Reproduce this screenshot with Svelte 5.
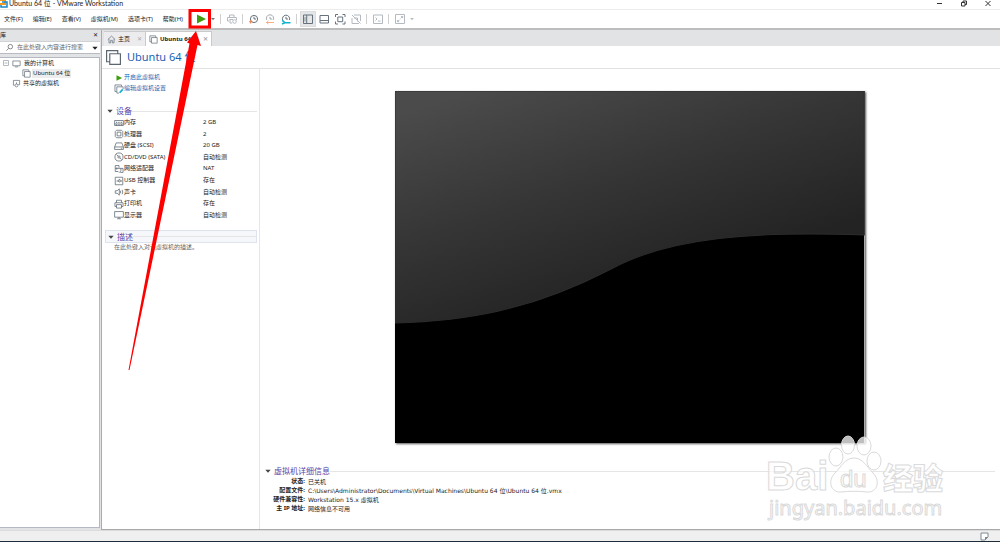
<script>
  const menus = ['文件(F)', '编辑(E)', '查看(V)', '虚拟机(M)', '选项卡(T)', '帮助(H)'];

  const clock = '<circle cx="8" cy="8" r="3.6"/><path d="M8 5.8V8H10"/>';
  const icons = {
    play: '<path d="M4 3.5V12.5L13 8Z" fill="#3f9c0c" stroke="none"/>',
    caret: '<path d="M5 6.5H11L8 10Z" fill="currentColor" stroke="none"/>',
    send: '<path d="M5.5 6V4H10V6M5 10H3.5V6.5H12.5V9M5.5 8.5H9M6 8.5V12H8"/><circle cx="10.5" cy="10.5" r="1.8"/>',
    snap: clock + '<path d="M4.6 9V12.5M3 10.8H6.4" stroke="#f08050"/>',
    revert: '<path d="M4.8 9A3.6 3.6 0 1 1 11.2 9M8 5.8V8H10" opacity=".6"/><path d="M12 11.5H4.5M6.5 9.8L4.5 11.5L6.5 13" stroke="#f4ae88"/>',
    manage: '<path d="M4.8 9.4A3.6 3.6 0 1 1 11.4 9M8 5.8V8H10"/><path d="M12.5 11.8H7M4.2 9.2L6.8 11.8L4 13" stroke="#12b3cf" stroke-width="1.6"/>',
    side: '<path d="M3.5 4H12.5V12.5H3.5ZM6.7 4V12.5"/><path d="M5 6V10.5" stroke-width=".7"/>',
    bottom: '<path d="M4 4.5H12.5V12H4ZM4 9.5H12.5"/>',
    full: '<path d="M3.5 6V3.5H6M10.5 3.5H13V6M13 10.5V13H10.5M6 13H3.5V10.5M5.8 6H10.7V10.7H5.8Z"/>',
    unity: '<path d="M4 7V12.5H11M6 4H12.5V10M6 7H9.5V10.5M4 4L12.5 12.5"/>',
    term: '<path d="M3.5 4H12.5V12.5H3.5ZM5.5 6.5L7 8L5.5 9.5M8 10H10.5"/>',
    stretch: '<path d="M3.5 3.5H12.5V12.5H3.5ZM9 5.5H10.7V7.2M10.5 5.7L8.7 7.5M5.5 9V10.7H7.2M5.7 10.5L7.5 8.7"/>',
    search: '<circle cx="9.5" cy="6.5" r="4"/><path d="M6.5 9.5L2.5 13.5"/>',
    home: '<path d="M1.5 8L8 2L14.5 8M3.5 7V14H6.5V9.5H9.5V14H12.5V7"/>',
    vm: '<path d="M4.5 12H1.5V1.5H12V4.5M4.5 4.5H14.5V14.5H4.5Z"/>',
    computer: '<path d="M1.5 3.5H14.5V12H1.5ZM5 14H11"/>',
    shared: '<path d="M5 11H2.5V2.5H13.5V10H11M8 6V9"/><circle cx="8" cy="11.5" r="2.5"/>',
    edit: '<path d="M4 12H1.5V1.5H12V4M8 14.5H4.5V4.5H14.5V8"/><path d="M9 14L14 8.5" stroke="#12b3cf" stroke-width="2.8"/>',
    memory: '<path d="M1 4H15V12H1ZM1 9.5H15M4 6V8M6.7 6V8M9.4 6V8M12 6V8M4 10V12M8 10V12M12 10V12"/>',
    cpu: '<path d="M5 5H11V11H5ZM4 2H12L14 4V12L12 14H4L2 12V4Z"/>',
    disk: '<path d="M3.5 3H12.5L15 9.5V13.5H1V9.5ZM1 9.5H15M11 11.5H13"/>',
    cd: '<circle cx="8" cy="8" r="6.5"/><circle cx="8" cy="8" r="1.8"/><path d="M4 4L6.7 6.7M9.5 9.5L12 12"/>',
    net: '<path d="M7 12H2V2.5H8V6M4.5 5.5V9M8 7H14.5V13.5H10M2 7H8M11 7V11L8 14"/>',
    usb: '<path d="M2 2H14V14H2ZM4 8H12M10.5 6.5L12 8L10.5 9.5M6 8L8 5.5H10M7 8L9 10.5"/>',
    sound: '<path d="M2 6H5L8.500 3V13L5 10H2ZM10.5 6V10M13 4.5Q15 8 13 11.5"/>',
    printer: '<path d="M4 6V2H12V6M4 12H1.5V6H14.5V12H12M4 9H12V14.5H4Z"/>',
    display: '<path d="M1 2.5H15V11.5H1ZM5 14H11M8 11.5V14"/>'
  };

  const tools = [
    ['play', '开启'], ['caret', '电源选项'], null, ['send', '发送', 'dim'], null,
    ['snap', '拍摄快照'], ['revert', '恢复快照'], ['manage', '管理快照'], null,
    ['side', '显示库', 'on'], ['bottom', '缩略图'], ['full', '全屏'], ['unity', 'Unity', 'dim'], null,
    ['term', '控制台', 'dim'], null, ['stretch', '拉伸', 'dim'], ['caret', '拉伸选项', 'dim']
  ];

  const devices = [
    ['memory', '内存', '2 GB'], ['cpu', '处理器', '2'], ['disk', '硬盘 (SCSI)', '20 GB'],
    ['cd', 'CD/DVD (SATA)', '自动检测'], ['net', '网络适配器', 'NAT'], ['usb', 'USB 控制器', '存在'],
    ['sound', '声卡', '自动检测'], ['printer', '打印机', '存在'], ['display', '显示器', '自动检测']
  ];

  const details = [
    ['状态:', '已关机'],
    ['配置文件:', 'C:\\Users\\Administrator\\Documents\\Virtual Machines\\Ubuntu 64 位\\Ubuntu 64 位.vmx'],
    ['硬件兼容性:', 'Workstation 15.x 虚拟机'],
    ['主 IP 地址:', '网络信息不可用']
  ];
</script>

{#snippet icon(name, size = 16, weight = 1)}
  <svg class="icon" width={size} height={size} viewBox="0 0 16 16" fill="none" stroke="currentColor" stroke-width={weight} aria-hidden="true">{@html icons[name]}</svg>
{/snippet}

<div class="window">
  <header class="titlebar">
    <svg width="8" height="9" viewBox="0 0 8 9" aria-hidden="true">
      <path d="M0 0H5V4H0" fill="none" stroke="#f29a1f" stroke-width="2" />
      <path d="M2 2H7V7H1V5" fill="none" stroke="#1787c9" stroke-width="1.5" />
    </svg>
    <span class="title">Ubuntu 64 位 - VMware Workstation</span>
    <div class="controls">
      <button aria-label="最小化"><svg width="8" height="8" viewBox="0 0 8 8"><path d="M1 3.5H6" /></svg></button>
      <button aria-label="还原"><svg width="8" height="8" viewBox="0 0 8 8"><path d="M1.5 2.5H5V6H1.5ZM3 2.5V1H6.5V4.5H5" /></svg></button>
      <button aria-label="关闭"><svg width="8" height="8" viewBox="0 0 8 8"><path d="M1.5 1L6.5 6M6.5 1L1.5 6" /></svg></button>
    </div>
  </header>

  <div class="menubar">
    <nav>
      {#each menus as m}<button>{m}</button>{/each}
    </nav>
    <div class="toolbar">
      {#each tools as t}
        {#if t}
          <button class="tool {t[2] ?? ''}" class:narrow={t[0] === 'caret'} aria-label={t[1]}>{@render icon(t[0], t[0] === 'caret' ? 10 : 16)}</button>
        {:else}
          <span class="sep"></span>
        {/if}
      {/each}
    </div>
  </div>

  <div class="body">
    <aside>
      <div class="libhead"><span>库</span><button aria-label="关闭库">✕</button></div>
      <div class="search">
        {@render icon('search', 9, 1.2)}
        <input aria-label="搜索" placeholder="在此处键入内容进行搜索" />
        <button aria-label="搜索选项">{@render icon('caret', 14)}</button>
      </div>
      <ul class="tree">
        <li>
          <svg width="6" height="6" viewBox="0 0 6 6" aria-hidden="true"><path d="M.5 .5H5.5V5.5H.5ZM1.5 3H4.5" fill="none" stroke="#b4bac0" /></svg>
          {@render icon('computer', 9, 1.3)}<span>我的计算机</span>
        </li>
        <li class="child">{@render icon('vm', 9, 1.3)}<span class="picked">Ubuntu 64 位</span></li>
        <li class="flat">{@render icon('shared', 9, 1.3)}<span>共享的虚拟机</span></li>
      </ul>
    </aside>

    <main>
      <div class="tabs">
        <button class="tab">{@render icon('home', 9, 1.3)}<span>主页</span><i>✕</i></button>
        <button class="tab current">{@render icon('vm', 9, 1.3)}<span>Ubuntu 64 位</span><i>✕</i></button>
      </div>
      <div class="page">
        <h1>{@render icon('vm', 17, 1.1)}<span>Ubuntu 64 位</span></h1>
        <div class="columns">
          <section class="summary">
            <div class="actions">
              <a href="#start">{@render icon('play', 10)}开启此虚拟机</a>
              <a href="#settings">{@render icon('edit', 10, 1.3)}编辑虚拟机设置</a>
            </div>
            <h2>{@render icon('caret', 14)}<span>设备</span></h2>
            <table>
              <tbody>
                {#each devices as d}
                  <tr><th scope="row"><span class="dev">{@render icon(d[0], 10, 1.2)}{d[1]}</span></th><td>{d[2]}</td></tr>
                {/each}
              </tbody>
            </table>
            <h2 class="boxed">{@render icon('caret', 14)}<span>描述</span></h2>
            <p>在此处键入对该虚拟机的描述。</p>
          </section>

          <section class="preview">
            <div class="stage">
              <svg class="screen" viewBox="0 0 469 352" preserveAspectRatio="none" role="img" aria-label="虚拟机屏幕">
                <defs>
                  <linearGradient id="sheen" gradientUnits="userSpaceOnUse" x1="50" y1="8" x2="125" y2="238">
                    <stop offset="0" stop-color="#4b4b4b" /><stop offset=".5" stop-color="#363636" /><stop offset="1" stop-color="#232323" />
                  </linearGradient>
                </defs>
                <rect width="469" height="352" fill="#000" />
                <path d="M0 0H469V144C360 140 275 146 216 178C135 220 70 230 0 232Z" fill="url(#sheen)" stroke="#2c2c2c" />
              </svg>
            </div>
            <div class="details">
              <h2>{@render icon('caret', 14)}<span>虚拟机详细信息</span></h2>
              <dl>
                {#each details as d}<dt>{d[0]}</dt><dd>{d[1]}</dd>{/each}
              </dl>
            </div>
          </section>
        </div>
      </div>
    </main>
  </div>

  <footer>
    <svg width="9" height="9" viewBox="0 0 9 9" aria-hidden="true"><path d="M1 1H8V5L5 8H1Z" fill="#fff" stroke="#7c8992" /><path d="M5 8V5H8Z" fill="#7c8992" /></svg>
  </footer>

  <svg class="pointer" width="220" height="380" viewBox="0 0 220 380" aria-hidden="true">
    <rect x="190" y="10.500" width="19.500" height="16.500" fill="none" stroke="#f00" stroke-width="3" />
    <path d="M128.500 370L189.500 43.500L187 42.500L196 31L201 46L197.500 45L129.500 370Z" fill="#f00" />
  </svg>

  <svg class="watermark" width="190" height="90" viewBox="0 0 190 90" aria-hidden="true">
    <g class="ink">
      <text x="3" y="56" font-size="40" font-weight="700">Bai</text>
      <ellipse cx="73" cy="23" rx="7" ry="9" />
      <ellipse class="solid" cx="85" cy="11" rx="6.500" ry="9" />
      <ellipse class="solid" cx="101" cy="12" rx="7" ry="9" />
      <ellipse cx="111" cy="27" rx="7" ry="9" />
      <path d="M91 24C100 24 104 33 110 39C118 47 114 59 104 58C96 57 86 57 78 58C68 59 64 47 72 39C78 33 82 24 91 24Z" />
      <text x="77" y="53" font-size="24">du</text>
      <text class="han" x="120" y="55" font-size="30" font-weight="900">经验</text>
      <text class="site" x="6" y="81" font-size="20">jingyan.baidu.com</text>
    </g>
  </svg>
</div>

<style>
  :global(body) { margin: 0; }
  .window {
    position: relative; display: flex; flex-direction: column; height: 100vh; overflow: hidden;
    box-sizing: border-box; border-bottom: 1px solid #1d2c38; background: #efefef; color: #222;
    font: 6px/9px "Noto Sans", "Noto Sans CJK SC", sans-serif;
  }
  button { border: 0; padding: 0; background: none; color: inherit; font: inherit; }
  .icon { flex: none; display: block; }
  .titlebar { display: flex; align-items: flex-start; height: 9px; background: #fff; border-bottom: 1px solid #ececec; }
  .title { margin-left: 1px; font-family: Lato, "Noto Sans CJK SC", sans-serif; font-size: 7px; line-height: 7px; }
  .controls { display: flex; gap: 16px; margin-left: auto; padding-right: 8px; }
  .controls button { display: flex; }
  .controls path { fill: none; stroke: #333; stroke-width: 1; }
  .menubar { display: flex; align-items: center; height: 18px; background: #fff; border-bottom: 2px solid #bdbdbd; }
  nav { display: flex; gap: 10px; padding: 0 10px 0 4px; }
  nav button { white-space: nowrap; }
  .toolbar { display: flex; align-items: center; color: #66737d; }
  .tool { display: flex; align-items: center; justify-content: center; width: 16px; height: 16px; }
  .tool.narrow { width: 9px; }
  .tool.on { background: #e4e6e8; outline: 1px solid #dadcde; outline-offset: -1px; }
  .tool.dim { color: #b4babf; }
  .sep { width: 1px; height: 10px; margin: 0 3px 0 2px; background: #d0d0d0; }

  .body { flex: 1; min-height: 0; display: grid; grid-template: minmax(0, 1fr) / 100px minmax(0, 1fr); gap: 1px; background: #e2e3e5; }
  aside { display: flex; flex-direction: column; padding-bottom: 2px; }
  .libhead { display: flex; justify-content: space-between; align-items: center; height: 11px; padding-right: 2px; }
  .search { display: flex; align-items: center; height: 13px; padding-left: 5px; background: #fff; border-top: 1px solid #d0d2d5; border-bottom: 1px solid #b8bbc2; box-sizing: border-box; color: #555; }
  .search input { flex: 1; min-width: 0; border: 0; padding: 0 0 0 3px; outline: 0; font: inherit; background: none; }
  .search input::placeholder { color: #666; opacity: 1; }
  .search button { color: #222; margin-right: -2px; }
  .tree { flex: 1; margin: 3px 0 0; padding: 0; list-style: none; background: #fff; border: solid #b5b8c2; border-width: 1px 1px 1px 0; }
  .tree li { display: flex; align-items: center; gap: 3px; height: 10px; padding-left: 3px; color: #65717b; }
  .tree span { color: #222; }
  .tree .child { padding-left: 22px; gap: 1px; }
  .tree .flat { padding-left: 12px; gap: 2px; }
  .tree .picked { background: #ededed; padding: 0 1px; }

  main { display: flex; flex-direction: column; min-width: 0; border-left: 1px solid #a9abb0; }
  .tabs { display: flex; height: 16px; padding: 1px 2px 0; box-sizing: border-box; }
  .tab { display: flex; align-items: center; gap: 2px; width: 42px; padding: 0 3px; box-sizing: border-box; border: solid #c9cacc; border-width: 1px 1px 0 0; background: #ececee; }
  .tab :global(svg) { color: #65717b; }
  .tab i { margin-left: auto; font-style: normal; color: #aaa; }
  .tab span { white-space: nowrap; }
  .tab.current { width: 66px; background: #fff; font-weight: 700; }
  .page { flex: 1; min-height: 0; display: flex; flex-direction: column; background: #fff; border-bottom: 1px solid #a9a9a9; }
  h1 { display: flex; align-items: center; gap: 5px; height: 22px; margin: 0; padding-left: 3px; border-bottom: 1px solid #e2e2e2; color: #5a6670; font-size: 11px; line-height: 16px; font-weight: 400; }
  h1 span { color: #1b5fb4; }
  .columns { flex: 1; min-height: 0; display: grid; grid-template: minmax(0, 1fr) / 158px minmax(0, 1fr); }
  .summary { border-right: 1px solid #e6e6e6; box-sizing: border-box; padding: 3px 2px 0 3px; }
  .actions { display: flex; flex-direction: column; padding-left: 9px; margin-bottom: 11px; }
  a { display: flex; align-items: center; height: 11px; color: #1769b5; text-decoration: none; }
  a :global(svg) { color: #6a7a86; }
  h2 { display: flex; align-items: center; height: 12px; margin: 0; color: #444; font-size: 8px; line-height: 12px; font-weight: 400; }
  h2 span { color: #5a43a6; }
  h2 :global(svg) { margin: 0 -1px 0 -2px; }
  h2::after { content: ""; flex: 1; border-top: 1px solid #e5e5e5; }
  .boxed { margin-top: 9px; border: 1px solid #dfe3ee; background: #f5f7fb; box-sizing: border-box; height: 13px; }
  table { width: 100%; height: 104px; border-collapse: collapse; }
  th, td { padding: 0; font-weight: 400; text-align: left; }
  th { width: 98px; padding-left: 9px; box-sizing: border-box; }
  .dev { display: flex; align-items: center; }
  .dev :global(svg) { color: #5a6670; }
  p { margin: 0; padding-left: 9px; color: #666; }
  .preview { display: flex; flex-direction: column; min-width: 0; min-height: 0; }
  .stage { flex: 1; min-height: 0; display: flex; justify-content: center; padding: 22px 0; }
  .screen { height: 100%; aspect-ratio: 4 / 3; box-shadow: 1px 1px 2px #555; }
  .details { padding: 0 5px 16px 3px; }
  dl { display: grid; grid-template-columns: 42px 1fr; column-gap: 3px; margin: 0; }
  dt { text-align: right; font-weight: 700; white-space: nowrap; }
  dd { margin: 0; font-family: "DejaVu Sans", "Noto Sans CJK SC", sans-serif; }
  footer { display: flex; align-items: center; justify-content: flex-end; height: 11px; padding-right: 11px; border-top: 1px solid #dcdcdc; box-sizing: border-box; }
  .pointer { position: absolute; left: 0; top: 0; pointer-events: none; }
  .watermark { position: absolute; right: 47px; bottom: 17px; overflow: visible; pointer-events: none; }
  .ink { fill: rgba(255, 255, 255, .7); stroke: #dadada; stroke-width: 1; font-family: "Liberation Sans", sans-serif; }
  .ink .solid { fill: rgba(255, 255, 255, .75); }
  .ink .han { font-family: "Noto Sans CJK SC", sans-serif; }
  .ink .site { font-family: "Noto Sans", sans-serif; }
</style>
